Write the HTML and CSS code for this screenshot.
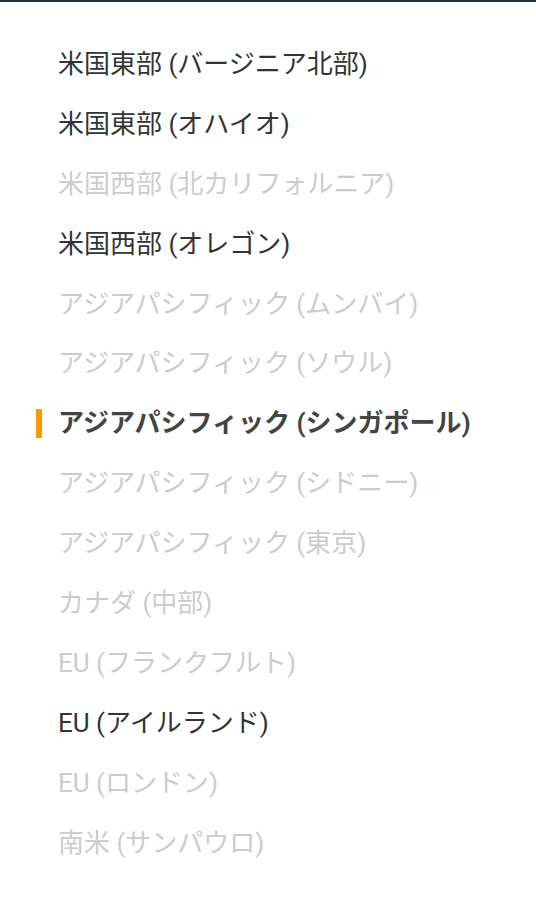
FILE: index.html
```html
<!DOCTYPE html>
<html lang="ja">
<head>
    <meta charset="UTF-8">
    <meta name="viewport" content="width=device-width, initial-scale=1.0">
    <title>リージョン選択</title>
    <link rel="stylesheet" href="styles.css">
</head>
<body>
    <div class="region-menu">
        <ul class="region-list">
            <li class="region-item">米国東部 (バージニア北部)</li>
            <li class="region-item">米国東部 (オハイオ)</li>
            <li class="region-item disabled">米国西部 (北カリフォルニア)</li>
            <li class="region-item">米国西部 (オレゴン)</li>
            <li class="region-item disabled">アジアパシフィック (ムンバイ)</li>
            <li class="region-item disabled">アジアパシフィック (ソウル)</li>
            <li class="region-item selected">アジアパシフィック (シンガポール)</li>
            <li class="region-item disabled">アジアパシフィック (シドニー)</li>
            <li class="region-item disabled">アジアパシフィック (東京)</li>
            <li class="region-item disabled">カナダ (中部)</li>
            <li class="region-item disabled">EU (フランクフルト)</li>
            <li class="region-item">EU (アイルランド)</li>
            <li class="region-item disabled">EU (ロンドン)</li>
            <li class="region-item disabled">南米 (サンパウロ)</li>
        </ul>
    </div>
</body>
</html>
```

FILE: styles.css
```css
* {
    margin: 0;
    padding: 0;
    box-sizing: border-box;
}

body {
    font-family: Roboto, "Noto Sans CJK JP", sans-serif;
    background: white;
    color: #333;
}

.region-menu {
    border-top: 2px solid #232f3e;
    padding: 33px 0 20px;
}

.region-list {
    list-style: none;
}

.region-item {
    position: relative;
    height: 59.9px;
    line-height: 59.9px;
    padding-left: 58px;
    font-size: 26px;
    color: #333;
}

.region-item.disabled {
    color: #ccc;
}

.region-item.selected {
    font-weight: bold;
    color: #444;
}

.region-item.selected::before {
    content: "";
    position: absolute;
    left: 36px;
    top: 15px;
    width: 6px;
    height: 29px;
    background: #f90;
}
```
